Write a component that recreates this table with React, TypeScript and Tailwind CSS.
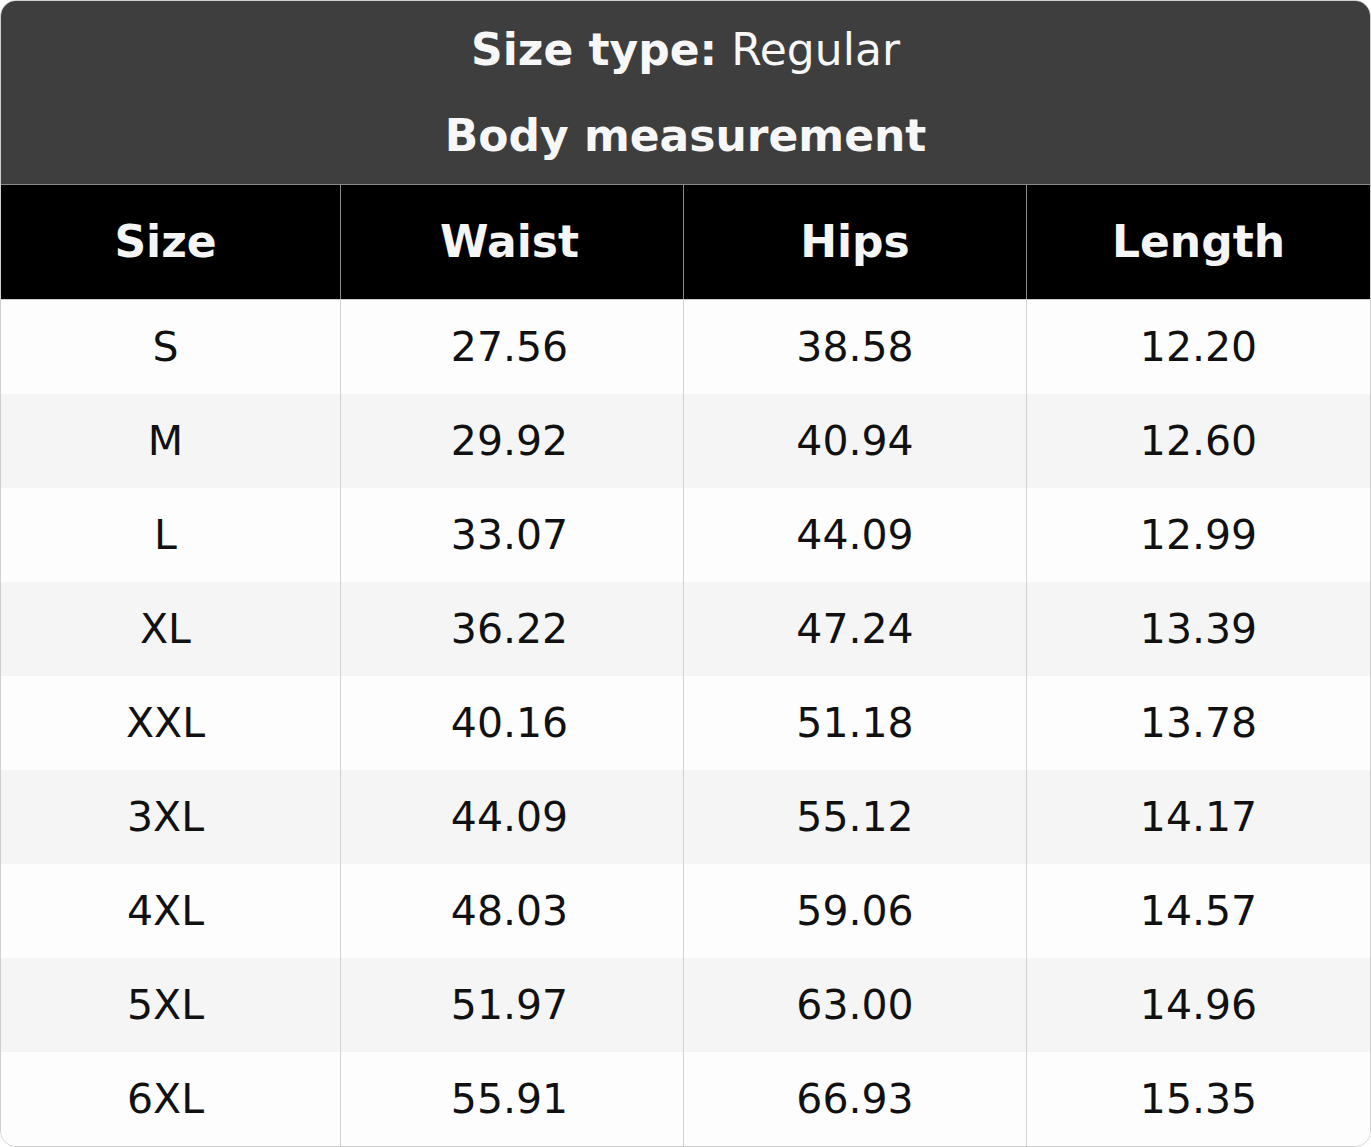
const rows = [
  ['S', '27.56', '38.58', '12.20'],
  ['M', '29.92', '40.94', '12.60'],
  ['L', '33.07', '44.09', '12.99'],
  ['XL', '36.22', '47.24', '13.39'],
  ['XXL', '40.16', '51.18', '13.78'],
  ['3XL', '44.09', '55.12', '14.17'],
  ['4XL', '48.03', '59.06', '14.57'],
  ['5XL', '51.97', '63.00', '14.96'],
  ['6XL', '55.91', '66.93', '15.35'],
]

const headers = ['Size', 'Waist', 'Hips', 'Length']

// small per-column nudges so text sits where the original puts it
const colPad = ['pr-[10px]', 'border-l pr-[5px]', 'border-l', 'border-l']

export default function App() {
  return (
    <div className="w-[1371px] h-[1147px] bg-white font-['DejaVu_Sans',sans-serif]">
      <div className="flex flex-col h-full rounded-[16px] border border-[#cfcfcf] overflow-hidden">
        {/* Title block */}
        <div className="h-[183px] shrink-0 bg-[#3e3e3e] flex flex-col items-center text-[#f7f7f7] text-[44px]">
          <div className="mt-[21px] leading-[56px]">
            <span className="font-bold">Size type:</span> Regular
          </div>
          <div className="mt-[30px] leading-[56px] font-bold">Body measurement</div>
        </div>

        {/* Column headers */}
        <div className="grid grid-cols-[339px_343px_343px_1fr] h-[115px] shrink-0 bg-black border-t border-[#8a8a8a]">
          {headers.map((h, i) => (
            <div
              key={h}
              className={`flex items-center justify-center text-[44px] font-bold text-[#f5f5f5] border-[#8a8a8a] ${colPad[i]}`}
            >
              {h}
            </div>
          ))}
        </div>

        {/* Body rows */}
        <div className="flex-1 grid grid-rows-9 border-t border-[#cfcfcf]">
          {rows.map((r, ri) => (
            <div
              key={r[0]}
              className={`grid grid-cols-[339px_343px_343px_1fr] ${ri % 2 === 1 ? 'bg-[#f5f5f5]' : 'bg-[#fdfdfd]'}`}
            >
              {r.map((v, i) => (
                <div
                  key={i}
                  className={`flex items-center justify-center pt-[2px] text-[41px] text-[#111] border-[#d2d2d2] ${colPad[i]}`}
                >
                  {v}
                </div>
              ))}
            </div>
          ))}
        </div>
      </div>
    </div>
  )
}
